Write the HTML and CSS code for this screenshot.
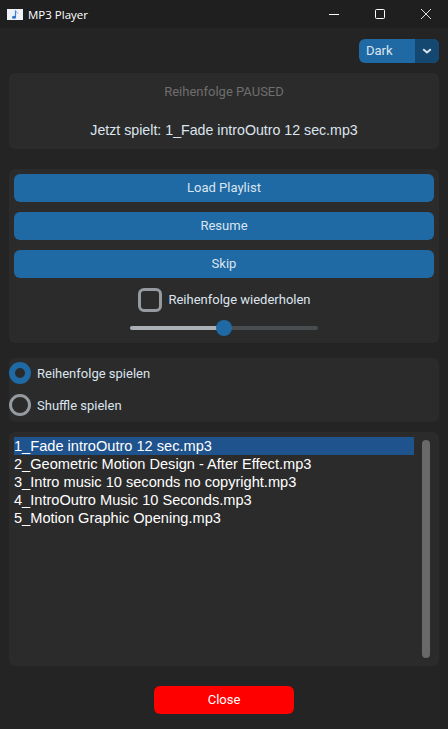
FILE: index.html
```html
<!DOCTYPE html>
<html lang="en">
  <head>
    <meta charset="UTF-8" />
    <meta name="viewport" content="width=device-width, initial-scale=1.0" />
    <title>MP3 Player</title>
    <link rel="stylesheet" href="styles.css">
  </head>
  <body>
    <div class="titlebar">
      <div class="app-icon">
        <svg width="16" height="11" viewBox="0 0 16 11">
          <rect width="16" height="11" fill="#eef1f5" />
          <path d="M8.5 1.5v6.5" stroke="#3f7fd0" stroke-width="1.2" fill="none" />
          <path d="M8.5 1.5c.6 1.6 2 1.8 2.4 3" stroke="#6fa4e0" stroke-width="1" fill="none" />
          <ellipse cx="7" cy="8.3" rx="2" ry="1.5" fill="#2f6fc4" />
        </svg>
      </div>
      <div class="app-name">MP3 Player</div>
      <div class="win-btn">
        <svg width="10" height="10" viewBox="0 0 10 10"><path d="M0 5.5h10" stroke="#fff" stroke-width="1" /></svg>
      </div>
      <div class="win-btn">
        <svg width="10" height="10" viewBox="0 0 10 10"><rect x="0.5" y="0.5" width="9" height="9" rx="1" stroke="#fff" fill="none" /></svg>
      </div>
      <div class="win-btn">
        <svg width="10" height="10" viewBox="0 0 10 10"><path d="M0 0l10 10M10 0L0 10" stroke="#ddd" stroke-width="1" /></svg>
      </div>
    </div>

    <div class="content">
      <div class="theme-row">
        <div class="theme-select">
          <span class="theme-label">Dark</span>
          <span class="theme-arrow">
            <svg width="10" height="6" viewBox="0 0 10 6"><path d="M1.2 1.2L5 4.4l3.8-3.2" stroke="#dce4ee" stroke-width="2" fill="none" /></svg>
          </span>
        </div>
      </div>

      <div class="frame status">
        <div class="status-state">Reihenfolge PAUSED</div>
        <div class="status-song">Jetzt spielt: 1_Fade introOutro 12 sec.mp3</div>
      </div>

      <div class="frame controls">
        <button class="btn">Load Playlist</button>
        <button class="btn">Resume</button>
        <button class="btn">Skip</button>
        <div class="repeat">
          <span class="checkbox"></span>
          <span>Reihenfolge wiederholen</span>
        </div>
        <div class="slider">
          <div class="slider-fill"></div>
          <div class="slider-knob"></div>
        </div>
      </div>

      <div class="frame modes">
        <div class="mode"><span class="radio radio-on"></span>Reihenfolge spielen</div>
        <div class="mode"><span class="radio"></span>Shuffle spielen</div>
      </div>

      <div class="frame playlist">
        <ul class="tracks">
          <li class="selected">1_Fade introOutro 12 sec.mp3</li>
          <li>2_Geometric Motion Design - After Effect.mp3</li>
          <li>3_Intro music 10 seconds no copyright.mp3</li>
          <li>4_IntroOutro Music 10 Seconds.mp3</li>
          <li>5_Motion Graphic Opening.mp3</li>
        </ul>
        <div class="scrollbar"></div>
      </div>

      <div class="close-row">
        <button class="btn close-btn">Close</button>
      </div>
    </div>
  </body>
</html>
```

FILE: styles.css
```css
html,
body {
  height: 100%;
}
body {
  margin: 0;
  background: #242424;
  color: #dce4ee;
  font-family: Roboto, sans-serif;
  font-size: 13px;
  overflow: hidden;
}
.titlebar {
  display: flex;
  align-items: center;
  height: 28px;
  padding-left: 7px;
  background: #1f1f1f;
  color: #fff;
}
.app-icon {
  display: flex;
  width: 16px;
}
.app-name {
  flex: 1;
  margin-left: 5px;
  font-family: "Open Sans", sans-serif;
  font-size: 11.5px;
}
.win-btn {
  display: flex;
  align-items: center;
  justify-content: center;
  width: 46px;
  height: 28px;
}
.win-btn:last-child {
  margin-right: -1px;
}
.content {
  padding: 11px 9px 0;
}
.theme-row {
  display: flex;
  justify-content: flex-end;
  margin-bottom: 10px;
}
.theme-select {
  display: flex;
  width: 80px;
  height: 24px;
  border-radius: 6px;
  overflow: hidden;
  background: #1f6aa5;
}
.theme-label {
  flex: 1;
  padding-left: 7px;
  line-height: 24px;
}
.theme-arrow {
  display: flex;
  align-items: center;
  justify-content: center;
  width: 24px;
  background: #144870;
}
.frame {
  background: #2b2b2b;
  border-radius: 6px;
}
.status {
  height: 76px;
  margin-bottom: 20px;
  text-align: center;
}
.status-state {
  padding-top: 11px;
  line-height: 16px;
  color: #6e6e6e;
}
.status-song {
  padding-top: 22px;
  line-height: 16px;
  font-family: "Liberation Sans", sans-serif;
  font-size: 14.2px;
}
.controls {
  display: flex;
  flex-direction: column;
  align-items: center;
  height: 164px;
  padding: 5px;
  margin-bottom: 15px;
}
.btn {
  display: block;
  width: 100%;
  height: 28px;
  margin-bottom: 10px;
  padding: 0 0 2px;
  border: none;
  border-radius: 6px;
  background: #1f6aa5;
  color: #dce4ee;
  font-family: Roboto, sans-serif;
  font-size: 13px;
}
.repeat {
  display: flex;
  align-items: center;
  gap: 6px;
  height: 24px;
  padding-left: 1px;
  line-height: 22px;
}
.checkbox {
  box-sizing: border-box;
  width: 24px;
  height: 24px;
  border: 3px solid #949a9f;
  border-radius: 6px;
}
.slider {
  position: relative;
  width: 188px;
  height: 4px;
  margin-top: 14px;
  border-radius: 2px;
  background: #4a4d50;
}
.slider-fill {
  width: 50%;
  height: 100%;
  border-radius: 2px;
  background: #aab0b5;
}
.slider-knob {
  position: absolute;
  left: 86px;
  top: -6px;
  width: 16px;
  height: 16px;
  border-radius: 50%;
  background: #1f6aa5;
}
.modes {
  height: 64px;
  margin-bottom: 10px;
}
.mode {
  display: flex;
  align-items: center;
  gap: 6px;
  height: 22px;
  padding-bottom: 10px;
}
.mode:first-child {
  padding-top: 4px;
}
.radio {
  box-sizing: border-box;
  width: 22px;
  height: 22px;
  border: 3px solid #949a9f;
  border-radius: 50%;
}
.radio-on {
  border: 6px solid #1f6aa5;
}
.playlist {
  display: flex;
  height: 234px;
  margin-bottom: 20px;
  padding: 5px;
  box-sizing: border-box;
}
.tracks {
  flex: 1;
  margin: 0;
  padding: 0;
  list-style: none;
  font-family: "Liberation Sans", sans-serif;
  font-size: 14.6px;
  line-height: 18px;
  color: #fff;
}
.selected {
  background: #1f538d;
}
.scrollbar {
  width: 8px;
  margin: 3px 4px 3px 8px;
  border-radius: 4px;
  background: #696969;
}
.close-row {
  display: flex;
  justify-content: center;
}
.close-btn {
  width: 140px;
  margin: 0;
  background: #ff0000;
  color: #fff;
}
```
